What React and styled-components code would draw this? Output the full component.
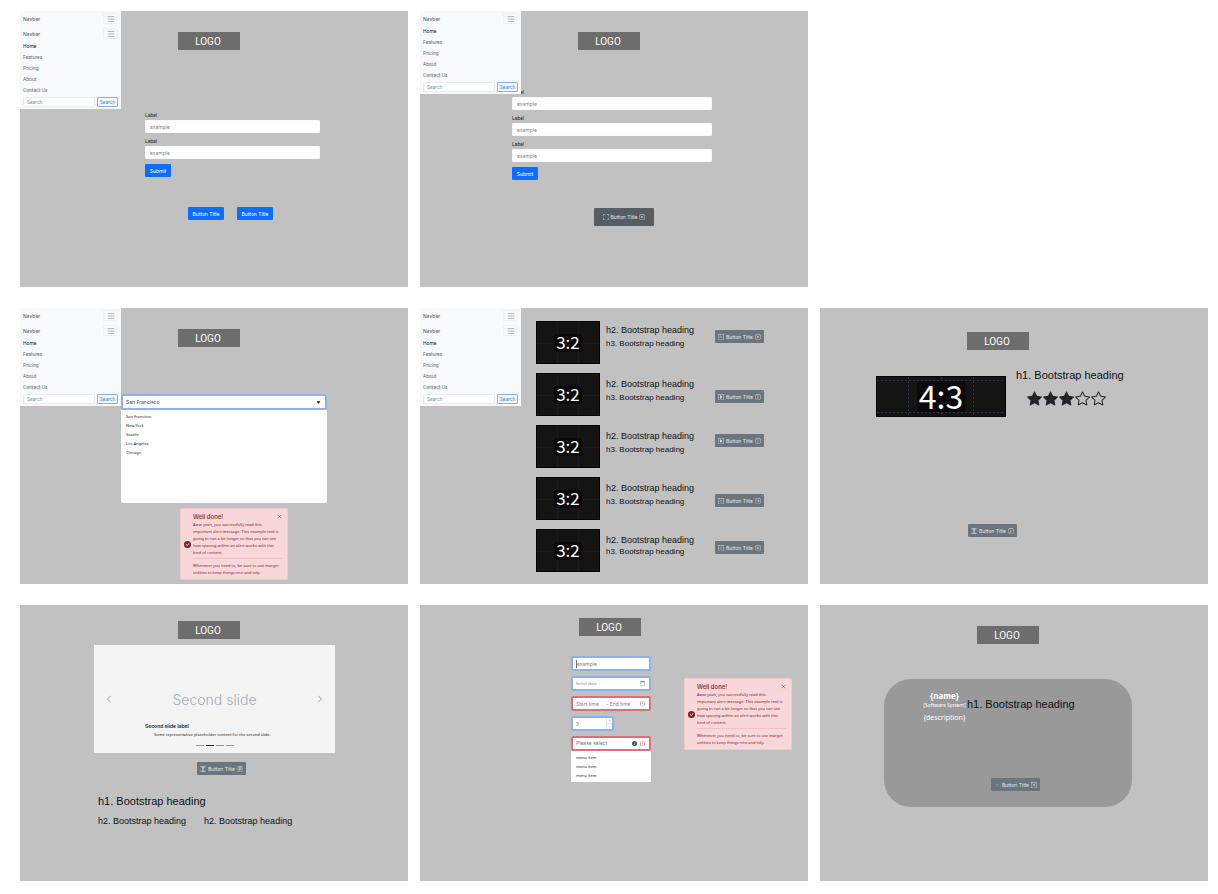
import React, { useId } from "react";
import styled, { createGlobalStyle, css } from "styled-components";
import {
  BsArrowRightCircle,
  BsCalendar,
  BsCaretDownFill,
  BsCaretRightSquare,
  BsCheckCircleFill,
  BsChevronLeft,
  BsChevronRight,
  BsClock,
  BsDashSquare,
  BsDot,
  BsExclamationCircle,
  BsFileText,
  BsFullscreen,
  BsInfoCircle,
  BsInfoCircleFill,
  BsList,
  BsPlayCircle,
  BsStar,
  BsStarFill,
  BsXLg,
  BsXSquare,
} from "react-icons/bs";

const ui = `Inter, "Liberation Sans", sans-serif`;
const helvetica = `"Liberation Sans", Arial, sans-serif`;
const roboto = `Roboto, "Liberation Sans", sans-serif`;
const noto = `"Noto Sans", "Open Sans", sans-serif`;
const source = `"Noto Sans CJK JP", "Noto Sans", sans-serif`;

const GlobalStyle = createGlobalStyle`
  *, *::before, *::after { box-sizing: border-box; }
  body { margin: 0; background: #fff; font-family: ${ui}; color: #212529; }
  h1, h2, h3, h4, p, ul { margin: 0; padding: 0; }
  ul { list-style: none; }
  button, input, select { font-family: inherit; margin: 0; }
  svg { display: block; flex: none; }
`;

const Sheet = styled.main`
  display: grid;
  grid-template-columns: repeat(3, minmax(0, 1fr));
  grid-auto-rows: minmax(276px, auto);
  gap: 21px 12px;
  padding: 11px 10px 12px 20px;
`;

const Board = styled.section`
  position: relative;
  display: flex;
  flex-direction: column;
  padding-top: ${(p) => p.$top}px;
  background: #c1c1c1;
`;

const EmptySlot = styled.div``;

const Logo = styled.div`
  width: 62px;
  height: 18px;
  margin-left: ${(p) => p.$left}px;
  padding-right: 2px;
  background: #6d6d6d;
  color: #fff;
  font: 10px/19px ${roboto};
  text-align: center;
`;

/* Navbar */
const Nav = styled.nav`
  position: absolute;
  top: 0;
  left: 0;
  width: 101px;
  padding: 0 3px 2px;
  background: #f8f9fa;
`;

const NavHeader = styled.div`
  display: flex;
  align-items: center;
  justify-content: space-between;
  height: 15px;
`;

const Brand = styled.a`
  color: #4a4e52;
  font-size: 5px;
  text-decoration: none;
`;

const Toggler = styled.button`
  display: flex;
  align-items: center;
  justify-content: center;
  width: 15px;
  height: 11px;
  padding: 0;
  border: 1px solid #eef0f1;
  border-radius: 1px;
  background: none;
  color: #70757a;
`;

const NavLink = styled.a`
  display: block;
  color: ${(p) => (p.$active ? "#212529" : "#6a6f74")};
  font-family: ${roboto};
  font-size: 5px;
  line-height: 11px;
  text-decoration: none;
`;

const SearchForm = styled.form`
  display: flex;
  gap: 2px;
  padding-top: 1px;
`;

const SearchInput = styled.input`
  flex: 1;
  min-width: 0;
  height: 10px;
  padding: 0 3px;
  border: 1px solid #e9ecef;
  border-radius: 1px;
  background: #fff;
  font-family: ${roboto};
  font-size: 5px;
  &::placeholder { color: #8a9299; opacity: 1; }
`;

const SearchButton = styled.button`
  width: 21px;
  height: 10px;
  padding: 0;
  border: 1px solid #7fb0fb;
  border-radius: 1px;
  background: none;
  color: #3d8bfd;
  font-family: ${roboto};
  font-size: 5px;
  line-height: 8px;
`;

/* Text form */
const Form = styled.form`
  display: flex;
  flex-direction: column;
  align-items: flex-start;
  gap: 5px;
  margin: ${(p) => p.$margin};
`;

const Field = styled.div`
  display: flex;
  flex-direction: column;
  gap: 2px;
  width: 100%;
`;

const Label = styled.label`
  font-family: ${roboto};
  font-size: 5px;
  line-height: 6px;
`;

const TextInput = styled.input`
  width: 100%;
  height: 13px;
  padding: 0 4px;
  border: 1px solid #fbfbfc;
  border-radius: 1px;
  background: #fff;
  color: #6c757d;
  font-size: 5px;
  &::placeholder { color: #7d858c; opacity: 1; }
`;

const Button = styled.button`
  display: inline-flex;
  align-items: center;
  justify-content: center;
  gap: 2px;
  height: ${(p) => (p.$large ? 18 : 13)}px;
  width: ${(p) => p.$width}px;
  padding: 0;
  border: 0;
  border-radius: 1px;
  background: ${(p) => (p.$large ? "#565e64" : p.$primary ? "#0d6efd" : "#6c757d")};
  color: ${(p) => (p.$primary ? "#fff" : "#e4e6e8")};
  font-size: 5px;
  line-height: 8px;
  white-space: nowrap;
`;

const Actions = styled.div`
  display: flex;
  gap: 13px;
  margin: ${(p) => p.$margin};
`;

/* Focus and error frames */
const frame = css`
  border: 2px solid ${(p) => (p.$error ? "#dd6f7b" : "#8fb1e9")};
  border-radius: 2px;
  background: #fff;
`;

const SelectWrap = styled.div`
  ${frame}
  display: flex;
  align-items: center;
  gap: 3px;
  height: ${(p) => p.$height || 15}px;
  padding-right: 4px;
  color: #212529;
`;

const Select = styled.select`
  flex: 1;
  min-width: 0;
  height: 11px;
  padding: 0 3px;
  border: 0;
  appearance: none;
  background: none;
  color: ${(p) => (p.$muted ? "#6c757d" : "#43474b")};
  font-size: 5px;
  line-height: 11px;
`;

const Menu = styled.ul`
  min-height: ${(p) => p.$height}px;
  padding: 2px 5px;
  border-radius: 0 0 1px 1px;
  background: #fff;
`;

const MenuItem = styled.li`
  color: #212529;
  font-family: ${noto};
  font-size: 4px;
  line-height: 9px;
`;

const Picker = styled.div`
  margin: 47px 81px 0 101px;
`;

/* Alert */
const AlertBox = styled.div`
  display: grid;
  grid-template-columns: 7px minmax(0, 1fr);
  align-items: center;
  gap: 2px;
  width: 108px;
  height: 72px;
  margin: ${(p) => p.$margin};
  padding: 0 5px 0 3px;
  border: 1px solid #f5c6cb;
  border-radius: 1px;
  background: #f8d7da;
  color: #842029;
  font-size: 4px;
  line-height: 7px;
`;

const AlertHead = styled.div`
  display: flex;
  align-items: center;
  justify-content: space-between;
  height: 9px;
`;

const AlertTitle = styled.h4`
  font-size: 6px;
  font-weight: 500;
  line-height: 9px;
`;

const AlertText = styled.p`
  font-family: ${noto};
  white-space: nowrap;
  & + & {
    margin-top: 2px;
    padding-top: 3px;
    border-top: 1px solid #efc1c7;
  }
`;

const CloseButton = styled.button`
  display: flex;
  padding: 0;
  border: 0;
  background: none;
  color: #5c3a3f;
`;

/* Media rows */
const MediaList = styled.div`
  display: flex;
  flex-direction: column;
  gap: 9px;
  margin-left: 116px;
`;

const MediaRow = styled.article`
  display: grid;
  grid-template-columns: 64px 103px auto;
  justify-content: start;
  align-items: start;
  gap: 6px;
  height: 43px;
`;

const Ratio = styled.div`
  position: relative;
  display: flex;
  align-items: center;
  justify-content: center;
  width: ${(p) => p.$width}px;
  height: ${(p) => p.$height}px;
  background: #141414;
  border: 1px solid #050506;
`;

const RatioLines = styled.svg`
  position: absolute;
  inset: 0;
  width: 100%;
  height: 100%;
`;

const RatioText = styled.span`
  position: relative;
  padding: 0 2px 3px;
  border-radius: 3px;
  background: #0a0a0a;
  color: #fff;
  font-family: ${source};
  font-size: ${(p) => p.$size}px;
  line-height: ${(p) => p.$line}px;
`;

const Headings = styled.div`
  display: flex;
  flex-direction: column;
  gap: ${(p) => (p.$tight ? 0 : 2)}px;
  padding-top: ${(p) => p.$top}px;
  white-space: nowrap;
`;

const headingFont = css`
  color: #0d1014;
  font-family: ${helvetica};
  font-weight: 400;
  white-space: nowrap;
`;

const Heading1 = styled.h1`
  ${headingFont}
  font-size: 11px;
  line-height: 14px;
`;

const Heading2 = styled.h2`
  ${headingFont}
  font-size: 9px;
  line-height: 12px;
`;

const Heading3 = styled.h3`
  ${headingFont}
  font-size: 8px;
  line-height: 12px;
`;

const RowAction = styled.div`
  display: flex;
  padding-top: ${(p) => p.$top}px;
`;

const Product = styled.article`
  display: flex;
  align-items: flex-end;
  gap: 10px;
  margin: 18px 0 0 56px;
`;

const ProductInfo = styled.div`
  display: flex;
  flex-direction: column;
  gap: 9px;
  height: 49px;
`;

const Stars = styled.div`
  display: flex;
  gap: 1px;
  padding-left: 11px;
  color: #212529;
`;

/* Carousel */
const Carousel = styled.div`
  display: grid;
  grid-template-columns: 30px minmax(0, 1fr) 30px;
  align-items: center;
  height: 108px;
  margin: 6px 73px 0 74px;
  background: #f4f4f4;
`;

const Arrow = styled.button`
  display: flex;
  justify-content: center;
  padding: 0;
  border: 0;
  background: none;
  color: #7b7f83;
`;

const Slide = styled.div`
  display: flex;
  flex-direction: column;
  align-items: center;
  align-self: start;
  padding-top: 43px;
`;

const SlideTitle = styled.div`
  color: #a3acb6;
  font-size: 14px;
  font-weight: 300;
  line-height: 24px;
  white-space: nowrap;
`;

const Caption = styled.div`
  align-self: stretch;
  padding: 10px 0 0 21px;
  white-space: nowrap;
`;

const CaptionTitle = styled.h4`
  font-size: 5px;
  font-weight: 600;
  line-height: 8px;
`;

const CaptionText = styled.p`
  padding-left: 9px;
  font-family: ${noto};
  font-size: 4px;
  line-height: 9px;
`;

const Indicators = styled.div`
  display: flex;
  gap: 2px;
  padding-top: 6px;
`;

const Indicator = styled.button`
  width: 8px;
  height: 1px;
  padding: 0;
  border: 0;
  background: ${(p) => (p.$active ? "#222" : "#979797")};
`;

const HeadingGroup = styled.div`
  display: flex;
  flex-wrap: wrap;
  gap: 7px 18px;
  margin: 19px 70px 0 78px;
  & > h1 { flex: 1 0 100%; }
`;

/* Validation board */
const Split = styled.div`
  display: flex;
  align-items: flex-start;
  gap: 33px;
  margin: 20px 0 0 151px;
`;

const Controls = styled.form`
  display: flex;
  flex-direction: column;
  gap: 5px;
  width: 80px;
`;

const ControlBox = styled.div`
  ${frame}
  display: flex;
  align-items: center;
  width: ${(p) => (p.$short ? "43px" : "100%")};
  height: 15px;
  padding: 0 ${(p) => (p.$short ? 0 : 4)}px 0 3px;
  color: #6c757d;
  font-size: 5px;
`;

const BareInput = styled.input`
  flex: 1;
  min-width: 0;
  width: 20px;
  height: 11px;
  padding: 0;
  border: 0;
  outline: 0;
  background: none;
  color: #6c757d;
  font-family: ${(p) => (p.$small ? noto : ui)};
  font-size: ${(p) => (p.$small ? 4 : 5)}px;
  &::placeholder { color: #7d858c; opacity: 1; }
`;

const Cursor = styled.span`
  width: 1px;
  height: 8px;
  background: #6c757d;
`;

const Steps = styled.div`
  display: grid;
  width: 6px;
  height: 11px;
  border-left: 1px solid #e3e5e8;
`;

const Step = styled.button`
  display: flex;
  align-items: center;
  justify-content: center;
  padding: 0;
  border: 0;
  background: none;
  color: #9aa0a6;
  font-size: 4px;
  line-height: 5px;
  & + & { border-top: 1px solid #e3e5e8; }
`;

/* System card */
const SystemCard = styled.div`
  display: flex;
  flex-direction: column;
  justify-content: space-between;
  height: 128px;
  margin: 35px 76px 0 64px;
  padding: 11px 0 16px;
  border-radius: 27px;
  background: #999;
`;

const SystemHead = styled.div`
  display: flex;
  align-items: flex-start;
  padding-left: 38px;
  & > h1 { padding-top: 7px; }
`;

const SystemText = styled.div`
  width: 45px;
  color: #fff;
  font-family: ${noto};
  font-size: 7px;
  line-height: 12px;
  text-align: center;
  white-space: nowrap;
`;

const SystemName = styled.strong`
  display: block;
  font-size: 8px;
  line-height: 12px;
`;

const SystemKind = styled.span`
  display: block;
  padding-bottom: 3px;
  font-size: 5px;
  line-height: 7px;
`;

function BeamIcon({ size }) {
  return (
    <svg width={size} height={size} viewBox="0 0 16 16" fill="none" stroke="currentColor" strokeWidth="2" aria-hidden="true">
      <path d="M1 2H15M1 14H15M8 2V14M5 5H11" />
    </svg>
  );
}

function NavPanel({ headers = 2 }) {
  return (
    <Nav>
      {Array.from({ length: headers }, (_, i) => (
        <NavHeader key={i}>
          <Brand href="#">Navbar</Brand>
          <Toggler type="button" aria-label="Toggle navigation"><BsList size={10} /></Toggler>
        </NavHeader>
      ))}
      {["Home", "Features", "Pricing", "About", "Contact Us"].map((name, i) => (
        <NavLink href="#" key={name} $active={i === 0}>{name}</NavLink>
      ))}
      <SearchForm>
        <SearchInput aria-label="Search" placeholder="Search" />
        <SearchButton type="button">Search</SearchButton>
      </SearchForm>
    </Nav>
  );
}

function LabelledField() {
  const id = useId();
  return (
    <Field>
      <Label htmlFor={id}>Label</Label>
      <TextInput id={id} placeholder="example" />
    </Field>
  );
}

function IconButton({ left: Left, right: Right, large, width = 49 }) {
  return (
    <Button type="button" $large={large} $width={width}>
      <Left size={6} />
      Button Title
      <Right size={6} />
    </Button>
  );
}

function Alert({ margin }) {
  return (
    <AlertBox role="alert" $margin={margin}>
      <BsCheckCircleFill size={7} />
      <div>
        <AlertHead>
          <AlertTitle>Well done!</AlertTitle>
          <CloseButton type="button" aria-label="Close"><BsXLg size={5} /></CloseButton>
        </AlertHead>
        <AlertText>
          Aww yeah, you successfully read this<br />
          important alert message. This example text is<br />
          going to run a bit longer so that you can see<br />
          how spacing within an alert works with this<br />
          kind of content.
        </AlertText>
        <AlertText>
          Whenever you need to, be sure to use margin<br />
          utilities to keep things nice and tidy.
        </AlertText>
      </div>
    </AlertBox>
  );
}

function RatioImage({ wide }) {
  return wide ? (
    <Ratio $width={130} $height={41}>
      <RatioLines viewBox="0 0 128 39" preserveAspectRatio="none" fill="none" stroke="#2c3547" strokeDasharray="2 2">
        <path d="M0 3.5H128M0 35.5H128M31.500 0V39M64.500 0V39M96.500 0V39" />
      </RatioLines>
      <RatioText $size={32} $line={28}>4:3</RatioText>
    </Ratio>
  ) : (
    <Ratio $width={64} $height={43}>
      <RatioLines viewBox="0 0 62 41" preserveAspectRatio="none" fill="none" stroke="#20222a" strokeDasharray="1 1">
        <path d="M0 21.500H62M20.500 0V41M41.500 0V41" />
      </RatioLines>
      <RatioText $size={17} $line={15}>3:2</RatioText>
    </Ratio>
  );
}

const mediaRows = [
  { head: 3, action: 9, left: BsDashSquare, right: BsPlayCircle },
  { head: 5, action: 17, left: BsCaretRightSquare, right: BsInfoCircle },
  { head: 5, action: 9, left: BsCaretRightSquare, right: BsInfoCircle },
  { head: 5, action: 17, left: BsDashSquare, right: BsArrowRightCircle },
  { head: 5, action: 12, left: BsDashSquare, right: BsPlayCircle, tight: true },
];

export default function App() {
  return (
    <>
      <GlobalStyle />
      <Sheet>
        <Board $top={21}>
          <Logo $left={158}>LOGO</Logo>
          <Form $margin="62px 88px 0 125px">
            <LabelledField />
            <LabelledField />
            <Button type="button" $primary $width={26}>Submit</Button>
          </Form>
          <Actions $margin="30px 0 0 168px">
            <Button type="button" $primary $width={36}>Button Title</Button>
            <Button type="button" $primary $width={36}>Button Title</Button>
          </Actions>
          <NavPanel />
        </Board>

        <Board $top={21}>
          <Logo $left={158}>LOGO</Logo>
          <Form $margin="39px 96px 0 92px">
            <LabelledField />
            <LabelledField />
            <LabelledField />
            <Button type="button" $primary $width={26}>Submit</Button>
          </Form>
          <Actions $margin="28px 0 0 174px">
            <IconButton large width={60} left={BsFullscreen} right={BsPlayCircle} />
          </Actions>
          <NavPanel headers={1} />
        </Board>

        <EmptySlot />

        <Board $top={21}>
          <Logo $left={158}>LOGO</Logo>
          <Picker>
            <SelectWrap $height={16}>
              <Select aria-label="City" defaultValue="San Francisco">
                <option>San Francisco</option>
                <option>New York</option>
                <option>Seattle</option>
                <option>Los Angeles</option>
                <option>Chicago</option>
              </Select>
              <BsCaretDownFill size={5} />
            </SelectWrap>
            <Menu $height={93}>
              {["San Francisco", "New York", "Seattle", "Los Angeles", "Chicago"].map((city) => (
                <MenuItem key={city}>{city}</MenuItem>
              ))}
            </Menu>
          </Picker>
          <Alert margin="5px 0 0 160px" />
          <NavPanel />
        </Board>

        <Board $top={13}>
          <MediaList>
            {mediaRows.map((row, i) => (
              <MediaRow key={i}>
                <RatioImage />
                <Headings $top={row.head} $tight={row.tight}>
                  <Heading2>h2. Bootstrap heading</Heading2>
                  <Heading3>h3. Bootstrap heading</Heading3>
                </Headings>
                <RowAction $top={row.action}>
                  <IconButton left={row.left} right={row.right} />
                </RowAction>
              </MediaRow>
            ))}
          </MediaList>
          <NavPanel />
        </Board>

        <Board $top={24}>
          <Logo $left={147}>LOGO</Logo>
          <Product>
            <RatioImage wide />
            <ProductInfo>
              <Heading1>h1. Bootstrap heading</Heading1>
              <Stars role="img" aria-label="3 of 5 stars">
                <BsStarFill size={15} />
                <BsStarFill size={15} />
                <BsStarFill size={15} />
                <BsStar size={15} />
                <BsStar size={15} />
              </Stars>
            </ProductInfo>
          </Product>
          <Actions $margin="107px 0 0 148px">
            <IconButton left={BeamIcon} right={BsInfoCircle} />
          </Actions>
        </Board>

        <Board $top={16}>
          <Logo $left={158}>LOGO</Logo>
          <Carousel>
            <Arrow type="button" aria-label="Previous"><BsChevronLeft size={8} /></Arrow>
            <Slide>
              <SlideTitle>Second slide</SlideTitle>
              <Caption>
                <CaptionTitle>Second slide label</CaptionTitle>
                <CaptionText>Some representative placeholder content for the second slide.</CaptionText>
              </Caption>
              <Indicators>
                {[0, 1, 2, 3].map((n) => (
                  <Indicator key={n} type="button" aria-label={`Slide ${n + 1}`} $active={n === 1} />
                ))}
              </Indicators>
            </Slide>
            <Arrow type="button" aria-label="Next"><BsChevronRight size={8} /></Arrow>
          </Carousel>
          <Actions $margin="9px 0 0 177px">
            <IconButton left={BeamIcon} right={BsFileText} />
          </Actions>
          <HeadingGroup>
            <Heading1>h1. Bootstrap heading</Heading1>
            <Heading2>h2. Bootstrap heading</Heading2>
            <Heading2>h2. Bootstrap heading</Heading2>
          </HeadingGroup>
        </Board>

        <Board $top={13}>
          <Logo $left={159}>LOGO</Logo>
          <Split>
            <Controls>
              <ControlBox>
                <Cursor />
                <BareInput aria-label="Example" placeholder="example" />
              </ControlBox>
              <ControlBox>
                <BareInput $small aria-label="Date" placeholder="Select date" />
                <BsCalendar size={5} />
              </ControlBox>
              <ControlBox $error>
                <BareInput aria-label="Start time" placeholder="Start time" />
                -&nbsp;
                <BareInput aria-label="End time" placeholder="End time" />
                <BsClock size={5} />
              </ControlBox>
              <ControlBox $short>
                <BareInput aria-label="Quantity" defaultValue="3" />
                <Steps>
                  <Step type="button" aria-label="Increase">+</Step>
                  <Step type="button" aria-label="Decrease">-</Step>
                </Steps>
              </ControlBox>
              <div>
                <SelectWrap $error>
                  <Select $muted aria-label="Menu item" defaultValue="">
                    <option value="">Please select</option>
                    <option>menu item</option>
                  </Select>
                  <BsInfoCircleFill size={5} color="#495057" />
                  <BsExclamationCircle size={5} color="#dc3545" />
                </SelectWrap>
                <Menu $height={31}>
                  <MenuItem>menu item</MenuItem>
                  <MenuItem>menu item</MenuItem>
                  <MenuItem>menu item</MenuItem>
                </Menu>
              </div>
            </Controls>
            <Alert margin="22px 0 0" />
          </Split>
        </Board>

        <Board $top={21}>
          <Logo $left={157}>LOGO</Logo>
          <SystemCard>
            <SystemHead>
              <SystemText>
                <SystemName>{"{name}"}</SystemName>
                <SystemKind>[Software System]</SystemKind>
                {"{description}"}
              </SystemText>
              <Heading1>h1. Bootstrap heading</Heading1>
            </SystemHead>
            <Actions $margin="0 0 0 107px">
              <IconButton left={BsDot} right={BsXSquare} />
            </Actions>
          </SystemCard>
        </Board>
      </Sheet>
    </>
  );
}
